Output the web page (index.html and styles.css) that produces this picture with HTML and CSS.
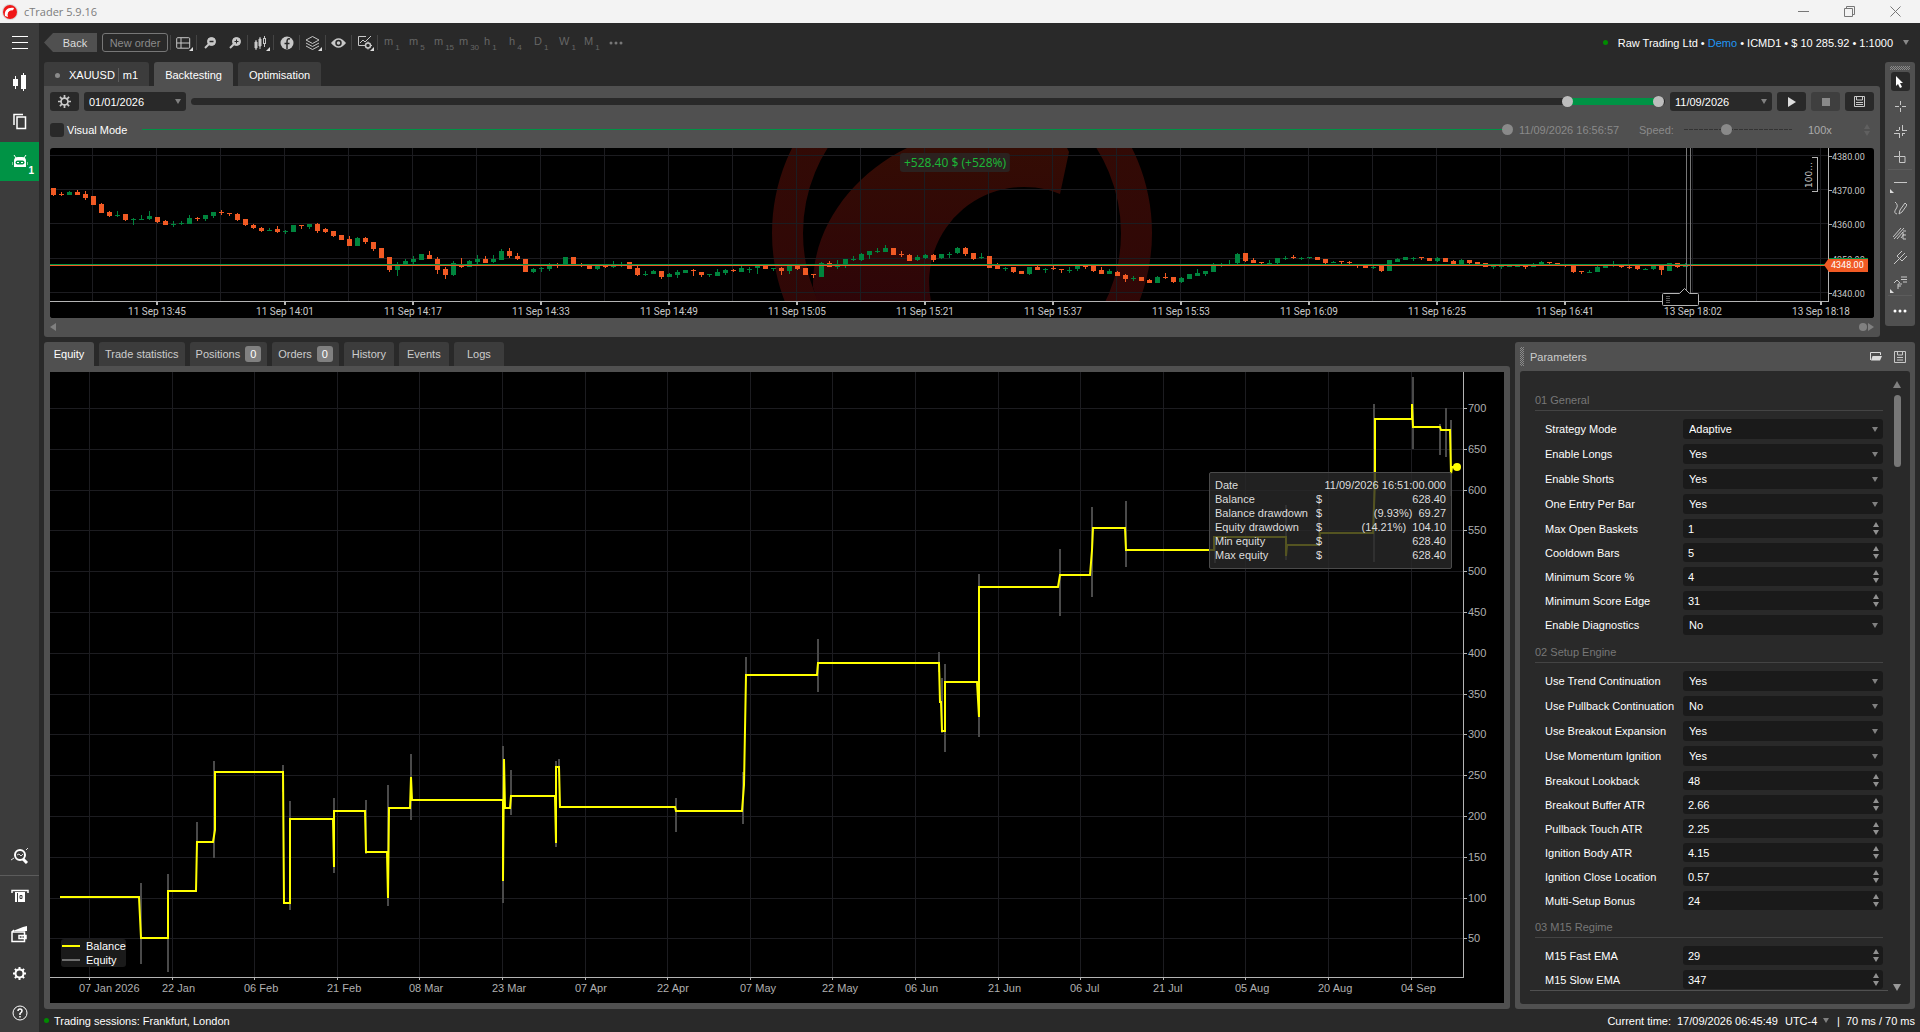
FILE: index.html
```html
<!DOCTYPE html>
<html lang="en">
<head>
<meta charset="utf-8">
<title>cTrader 5.9.16</title>
<link rel="stylesheet" href="styles.css">
</head>
<body>
<div class="app">
  <header class="titlebar">
    <svg class="brand" viewBox="0 0 16 16"><circle cx="8" cy="8" r="8" fill="#d9d9d9"/><circle cx="8" cy="8" r="7" fill="#f01818"/><path d="M3 12C2 6 6 3 12 4l-1 3C8 6 5 8 6 13Z" fill="#fff"/><path d="M7 12c-1-4 2-5 4-4l1-2" fill="none" stroke="#f01818" stroke-width="2"/></svg>
    <span class="title">cTrader 5.9.16</span>
    <div class="window-buttons">
      <button aria-label="Minimise"><svg width="11" height="11"><path d="M0 5.5h11"/></svg></button>
      <button aria-label="Restore"><svg width="11" height="11"><path d="M.5 2.500h8v8h-8zM2.500 2.500v-2h8v8h-2"/></svg></button>
      <button aria-label="Close"><svg width="11" height="11"><path d="M.5.5l10 10M10.500.5l-10 10"/></svg></button>
    </div>
  </header>

  <div class="body">
    <nav class="sidebar">
      <button class="menu" aria-label="Menu"><svg width="16" height="13" class="line thin"><path d="M0 .5h16M0 6.500h16M0 12.500h16"/></svg></button>
      <button aria-label="Trade"><svg width="16" height="18" fill="#fff"><path d="M1 6h5v7H1zM3 3h1v13H3zM9 2h5v14H9zM11 0h1v18h-1z"/></svg></button>
      <button aria-label="Copy"><svg width="14" height="17" class="line copy"><path d="M4 4h8.500v11.500H4zM1 12V1.500h9"/></svg></button>
      <button class="active" aria-label="Algo"><svg width="16" height="14"><path d="M2 0l2 3M14 0l-2 3" stroke="#fff"/><path d="M2 12V6q0-4 4-4h4q4 0 4 4v6z" fill="#fff"/><path d="M0 7v3M16 7v3" stroke="#fff"/><rect x="3.500" y="5.500" width="9" height="4" rx="2" fill="#009345"/><path d="M5 7h2v1H5zM9 7h2v1H9z" fill="#fff"/></svg><span class="count">1</span></button>
      <span class="spacer"></span>
      <button aria-label="Analyze"><svg width="18" height="16"><circle cx="9" cy="7" r="5" fill="none" stroke="#fff" stroke-width="2"/><path d="M12 11l4 4" stroke="#fff" stroke-width="3"/><path d="M0 12l3-2M15 2l2-2M6 7l2-1 2 2 2-2" stroke="#ddd" fill="none"/></svg></button>
      <hr>
      <button aria-label="Withdraw"><svg width="18" height="14"><path d="M1 4V1.500h16V4" fill="none" stroke="#fff" stroke-width="1.500"/><path d="M4 3h10v10H4z" fill="#fff"/><path d="M6.500 4v9M9 6.500h2v3H9z" stroke="#3c3c3c" fill="none"/></svg></button>
      <button aria-label="Wallet"><svg width="18" height="17"><path d="M2 5l10-4 4-1v5z" fill="#fff"/><path d="M1 6h12.500v9.500H1zM1 6l2-2M8 9.500h7v3H8z" fill="#3c3c3c" stroke="#fff" stroke-width="1.500"/><path d="M10 10.500h2v1h-2z" fill="#fff"/></svg></button>
      <button aria-label="Settings"><svg width="15" height="15" viewBox="0 0 15 15"><g stroke="#fff" fill="none"><circle cx="7.500" cy="7.500" r="4" stroke-width="2"/><path stroke-width="2" d="M7.500 1v2.500M7.500 11.500V14M1 7.500h2.500M11.500 7.500H14M2.900 2.900l1.800 1.800M10.300 10.300l1.800 1.800M12.100 2.900l-1.800 1.800M4.700 10.300l-1.800 1.800"/></g></svg></button>
      <button aria-label="Help"><svg width="16" height="16" class="line thin"><circle cx="8" cy="8" r="7"/><path d="M6 6q0-2 2-2t2 2q0 1-2 2.500V10M8 11v1.500" stroke-width="1.500"/></svg></button>
    </nav>

    <div class="content">
      <div class="toolbar">
        <button class="back">Back</button>
        <button class="new-order">New order</button>
        <div class="tools">
          <button class="sub" aria-label="Layout"><svg width="15" height="12" class="ico"><rect x=".7" y=".7" width="13" height="10.500" rx="1"/><path d="M5 1v10M5 6h9M1 6h4"/></svg></button>
          <button aria-label="Zoom out"><svg width="12" height="12" class="ico"><circle cx="7.500" cy="4.500" r="4" fill="#c8c8c8"/><path d="M1 11l4-4" stroke-width="2"/><path d="M5.500 4.500h4" stroke="#292929" stroke-width="1.500"/></svg></button>
          <button class="bare" aria-label="Zoom in"><svg width="12" height="12" class="ico"><circle cx="7.500" cy="4.500" r="4" fill="#c8c8c8"/><path d="M1 11l4-4" stroke-width="2"/><path d="M5.500 4.500h4M7.500 2.500v4" stroke="#292929"/></svg></button>
          <button class="sub" aria-label="Chart type"><svg width="13" height="14" class="ico"><path d="M1 6h2v6H1zM5 3h2v7H5z" fill="#c8c8c8"/><path d="M2 4v10M6 1v12M10.500 0v11"/><rect x="9.500" y="2.500" width="2" height="5" fill="#292929"/></svg></button>
          <button aria-label="Indicators"><svg width="14" height="14"><circle cx="7" cy="7" r="6.500" fill="#c8c8c8"/><path d="M10 3Q7 2 7 6v7M4.500 7.500h5" fill="none" stroke="#292929" stroke-width="1.500"/></svg></button>
          <button class="sub" aria-label="Objects"><svg width="15" height="14" class="ico"><path d="M1 4l6.500-3.500L14 4 7.500 7.500zM1 7l6.500 3.500L14 7M1 10l6.500 3.500L14 10"/></svg></button>
          <button aria-label="View options"><svg width="15" height="10"><path d="M0 5Q7.500-4.500 15 5 7.500 14.500 0 5z" fill="#c8c8c8"/><circle cx="7.500" cy="5" r="2.500" fill="#c8c8c8" stroke="#292929" stroke-width="1.500"/></svg></button>
          <button class="sub" aria-label="Chart settings"><svg width="15" height="15" class="ico"><path d="M7 10.500H1.500v-9H9M3 8l3-3 2 2 6-6"/><circle cx="11" cy="10.500" r="2.500" stroke-width="1.500"/><path d="M11 6.500v1.500M11 13v1.500M7 10.500h1.500M13.500 10.500H15"/></svg></button>
        </div>
        <div class="frames">
          <button>m<sub>1</sub></button><button>m<sub>5</sub></button><button>m<sub>15</sub></button><button>m<sub>30</sub></button><button>h<sub>1</sub></button><button>h<sub>4</sub></button><button>D<sub>1</sub></button><button>W<sub>1</sub></button><button>M<sub>1</sub></button>
          <button class="more" aria-label="More periods"><svg width="14" height="4" fill="#777"><circle cx="2" cy="2" r="1.500"/><circle cx="7" cy="2" r="1.500"/><circle cx="12" cy="2" r="1.500"/></svg></button>
        </div>
        <button class="account"><i class="dot"></i><span>Raw Trading Ltd • <b>Demo</b> • ICMD1 • $ 10 285.92 • 1:1000</span><i class="caret"></i></button>
      </div>

      <div class="upper">
        <section class="workspace">
          <div class="tabs">
            <button class="symbol"><i></i><span>XAUUSD</span><em>m1</em></button>
            <button class="on">Backtesting</button>
            <button>Optimisation</button>
          </div>
          <div class="panel">
            <div class="range-row">
              <button class="square" aria-label="Backtesting settings"><svg width="13" height="13" viewBox="0 0 15 15"><g stroke="#c8c8c8" fill="none"><circle cx="7.500" cy="7.500" r="4" stroke-width="2"/><path stroke-width="2" d="M7.500 0v3.500M7.500 11.500V15M0 7.500h3.500M11.500 7.500H15M2.200 2.200l2.500 2.500M10.300 10.300l2.500 2.500M12.800 2.200l-2.500 2.500M4.700 10.300l-2.500 2.500"/></g></svg></button>
              <select class="date" aria-label="Start date"><option>01/01/2026</option></select>
              <div class="span">
                <input type="range" aria-label="Range start" min="0" max="1000" value="937">
                <input type="range" aria-label="Range end" min="0" max="1000" value="999">
              </div>
              <select class="date" aria-label="End date"><option>11/09/2026</option></select>
              <button class="square" aria-label="Start"><svg width="8" height="10"><path d="M0 0l8 5-8 5z" fill="#ddd"/></svg></button>
              <button class="square off" aria-label="Stop" disabled><svg width="8" height="8"><path d="M0 0h8v8H0z" fill="#8a8a8a"/></svg></button>
              <button class="square" aria-label="Save"><svg width="13" height="13" class="ico"><path d="M1.500 1.500h10v10h-10zM3.500 1v4h6V1M3 7.500h7M3 9.500h7"/></svg></button>
            </div>
            <div class="visual-row">
              <label class="check"><input type="checkbox">Visual Mode</label>
              <input class="progress" type="range" aria-label="Playback position" value="100" disabled>
              <span class="stamp">11/09/2026 16:56:57</span>
              <label class="speed" for="speed">Speed:</label>
              <input class="rate" id="speed" type="range" min="0" max="100" value="38" disabled>
              <input class="factor" type="text" value="100x" aria-label="Speed factor" disabled>
            </div>
            <div class="price-chart">
              <svg id="price" role="img" aria-label="XAUUSD m1 chart"></svg>
              <output class="profit">+528.40 $ (+528%)</output>
            </div>
            <div class="scroll-row"><i class="left"></i><i class="knob"></i><i class="right"></i></div>
          </div>
        </section>

        <aside class="draw-tools">
          <i class="grip"></i>
          <button class="on" aria-label="Cursor"><svg width="8" height="12"><path d="M0 0l7 7H4l2 4-2 1-2-4-2 2z" fill="#fff"/></svg></button>
          <button aria-label="Crosshair"><svg width="11" height="11" class="ico"><path d="M5.500 0v4M5.500 7v4M0 5.500h4M7 5.500h4"/></svg></button>
          <button aria-label="Synchronised crosshair"><svg width="13" height="13" class="ico"><path d="M5.500 2v3M5.500 8v5M8.500 0v5M8.500 8v3M2 5.500h3M8 5.500h5M0 8.500h5M8 8.500h3"/></svg></button>
          <button aria-label="Measure"><svg width="12" height="12" class="ico"><path d="M5.500 0v5M0 5.500h5M5.500 5.500h5.500v6H5.500z"/></svg></button>
          <hr>
          <button class="sub" aria-label="Line"><svg width="13" height="3" class="ico"><path d="M0 1.500h13"/></svg></button>
          <button aria-label="Freehand"><svg width="13" height="14" class="ico"><path d="M1 1q4 3 1 7t1 5M5 13l1-4 5-7 2 2-5 7z"/></svg></button>
          <button aria-label="Channel"><svg width="14" height="14" class="ico"><path d="M0 11L8 2M1 13L11 2M4 13l6-7M8 12l3-4M10 6v7M13 5h-3M13 9h-3M13 13h-3"/></svg></button>
          <button aria-label="Pitchfork"><svg width="13" height="13" class="ico"><path d="M0 13l6-6M3 5l5 5M3 5l5-5M6 7l5-5M8 10l5-5"/></svg></button>
          <button class="sub" aria-label="Fibonacci"><svg width="14" height="14" class="ico"><path d="M1 7l3-3 3 3M5 8h4M5 8v5M5 10h3M8 1h6M8 3.500h6M10 6h4"/></svg></button>
          <hr>
          <button class="last" aria-label="More tools"><svg width="14" height="4" fill="#fff"><circle cx="2" cy="2" r="1.500"/><circle cx="7" cy="2" r="1.500"/><circle cx="12" cy="2" r="1.500"/></svg></button>
        </aside>
      </div>

      <div class="lower">
        <section class="report">
          <div class="tabs">
            <button class="on">Equity</button>
            <button>Trade statistics</button>
            <button>Positions <span class="badge">0</span></button>
            <button>Orders <span class="badge">0</span></button>
            <button>History</button>
            <button>Events</button>
            <button>Logs</button>
          </div>
          <div class="panel">
            <div class="equity-chart">
              <svg id="equity" role="img" aria-label="Equity curve"></svg>
              <ul class="legend"><li class="balance">Balance</li><li>Equity</li></ul>
              <table class="tip">
                <tr><th>Date</th><td colspan="2">11/09/2026 16:51:00.000</td></tr>
                <tr><th>Balance</th><td class="cur">$</td><td>628.40</td></tr>
                <tr><th>Balance drawdown</th><td class="cur">$</td><td>(9.93%)&nbsp; 69.27</td></tr>
                <tr><th>Equity drawdown</th><td class="cur">$</td><td>(14.21%)&nbsp; 104.10</td></tr>
                <tr><th>Min equity</th><td class="cur">$</td><td>628.40</td></tr>
                <tr><th>Max equity</th><td class="cur">$</td><td>628.40</td></tr>
              </table>
            </div>
          </div>
        </section>

        <section class="params">
          <header>
            <i class="grip"></i><h2>Parameters</h2>
            <button aria-label="Load"><svg width="13" height="9"><path d="M.5 8V.5h10V3" fill="none" stroke="#ddd"/><path d="M2.500 4H12l-2 4.500H1z" fill="#ddd"/></svg></button>
            <button aria-label="Save parameters"><svg width="12" height="12" class="ico"><path d="M.5.5h11v11H.5zM3.500 1v3h5V1M3 6.500h6M3 9h6"/></svg></button>
          </header>
          <div class="sheet">
            <form class="fields" id="fields"></form>
            <div class="bar"><i class="up"></i><i class="thumb"></i><i class="down"></i></div>
          </div>
        </section>
      </div>

      <footer class="status">
        <i class="dot"></i><span class="sessions">Trading sessions: Frankfurt, London</span>
        <span>Current time:</span><time>17/09/2026 06:45:49</time>
        <select class="zone" aria-label="Time zone"><option>UTC-4</option></select>
        <span>| &nbsp;70 ms / 70 ms</span>
      </footer>
    </div>
  </div>
</div>
<script src="app.js"></script>
</body>
</html>
```
FILE: styles.css
```css
* { box-sizing: border-box; }
html, body { height: 100%; }
body {
  margin: 0;
  background: #292929;
  color: #fff;
  font: 11px/14px "Liberation Sans", Arial, sans-serif;
  overflow: hidden;
}
button, select, input { font: inherit; color: inherit; border: 0; margin: 0; padding: 0; background: none; }
button { display: flex; align-items: center; justify-content: center; flex: none; white-space: nowrap; }
svg { display: block; flex: none; }
i { font-style: normal; flex: none; }
hr { border: 0; margin: 0; width: 100%; height: 1px; background: #5c5c5c; flex: none; }
.ico { fill: none; stroke: #c8c8c8; }
.line { fill: none; stroke: #fff; stroke-width: 2; }
.thin { stroke-width: 1; }
.copy { stroke-width: 1.5; }

.app { display: flex; flex-direction: column; height: 100vh; }
.titlebar { display: flex; align-items: center; height: 23px; padding: 0 2px; background: #f3f3f3; color: #7c7c7c; flex: none; }
.brand { width: 16px; height: 16px; }
.title { margin-left: 6px; font: 11px/16px "Open Sans", sans-serif; }
.window-buttons { display: flex; margin-left: auto; }
.window-buttons button { width: 46px; height: 20px; }
.window-buttons svg { fill: none; stroke: #777; }

.body { display: flex; flex: 1; min-height: 0; }
.sidebar { display: flex; flex-direction: column; gap: 1px; width: 39px; background: #3c3c3c; flex: none; }
.sidebar button { position: relative; width: 39px; height: 39px; }
.sidebar .menu { height: 38px; }
.sidebar .spacer { flex: 1; }
.sidebar .spacer ~ * { margin-top: -1px; }
.sidebar .active { background: #009345; }
.count { position: absolute; right: 5px; bottom: 3px; font-size: 10px; line-height: 14px; font-weight: bold; }

.content { display: flex; flex-direction: column; flex: 1; min-width: 0; padding: 0 5px; }

.toolbar { display: flex; align-items: center; height: 39px; flex: none; }
.back { width: 53px; height: 19px; padding-left: 9px; background: #505050; color: #ddd; clip-path: polygon(0 50%, 9px 0, 100% 0, 100% 100%, 9px 100%); }
.new-order { width: 66px; height: 19px; margin-left: 5px; border: 1px solid #777; border-radius: 3px; color: #8a8a8a; }
.tools { display: flex; align-items: center; margin-left: 2px; }
.tools button { position: relative; width: 26px; height: 15px; border-left: 1px solid #444; }
.tools .bare { width: 25px; border-left-color: transparent; }
.sub { position: relative; }
.sub::after { content: ""; position: absolute; right: 3px; bottom: -1px; border: 2px solid transparent; border-right-color: #ddd; border-bottom-color: #ddd; }
.frames { display: flex; border-left: 1px solid #444; height: 15px; align-items: center; padding-left: 6px; color: #666; }
.frames button { width: 25px; height: 18px; align-items: baseline; justify-content: flex-start; gap: 2px; }
.frames sub { font-size: 8px; line-height: 8px; vertical-align: baseline; position: relative; top: 5px; }
.frames .more { align-items: center; }
.account { margin-left: auto; gap: 10px; padding-right: 6px; }
.account b { font-weight: normal; color: #2196f3; }
.dot { width: 5px; height: 5px; border-radius: 50%; background: #008a00; }
.caret { border: 3px solid transparent; border-top: 5px solid #888; border-bottom: 0; }

.upper { display: flex; gap: 5px; align-items: flex-start; flex: none; }
.workspace { flex: 1; min-width: 0; }
.tabs { display: flex; gap: 5px; }
.tabs button { height: 24px; padding: 0 11px; background: #3c3c3c; border-radius: 3px 3px 0 0; color: #ccc; }
.tabs .on { background: #505050; color: #fff; }
.workspace .tabs button { color: #fff; padding-top: 2px; }
.tabs .symbol i { width: 5px; height: 5px; border-radius: 50%; background: #8a8a8a; margin-right: 9px; }
.tabs .symbol em { font-style: normal; border-left: 1px solid #5c5c5c; margin-left: 3px; padding-left: 4px; }
.panel { background: #505050; border-radius: 0 3px 3px 3px; padding: 6px; }

.range-row { display: flex; align-items: center; gap: 5px; height: 19px; }
.square { width: 29px; height: 19px; background: #292929; border-radius: 3px; }
.square.off { background: #3f3f3f; }
select {
  appearance: none;
  background: #292929 url("data:image/svg+xml,%3Csvg xmlns='http://www.w3.org/2000/svg' width='6' height='5'%3E%3Cpath d='M0 0h6L3 5z' fill='%23808080'/%3E%3C/svg%3E") no-repeat right 5px center;
  border-radius: 3px;
}
.date { width: 102px; height: 19px; padding-left: 5px; }
.span { display: grid; flex: 1; height: 7px; border-radius: 4px; background: linear-gradient(90deg, #292929 93.5%, #009345 93.5%, #009345 99.5%, #292929 99.5%); }
.span input { grid-area: 1 / 1; width: 100%; height: 7px; }
input[type="range"] { appearance: none; background: none; }
input[type="range"]::-webkit-slider-thumb { appearance: none; width: 11px; height: 11px; border-radius: 50%; background: #bdbdbd; }

.visual-row { display: flex; align-items: center; height: 37px; color: #8a8a8a; }
.check { display: flex; align-items: center; gap: 3px; color: #fff; }
.check input { appearance: none; width: 14px; height: 14px; border-radius: 3px; background: #292929; }
input.progress { flex: 1; height: 11px; margin: 0 6px 0 15px; background: linear-gradient(#009345, #009345) no-repeat left center / 100% 1px; }
.stamp { width: 120px; }
.speed { width: 45px; }
input.rate { width: 108px; height: 11px; background: repeating-linear-gradient(90deg, #333 0 4px, transparent 4px 5px) no-repeat left center / 100% 1px; }
input.progress::-webkit-slider-thumb, input.rate::-webkit-slider-thumb { background: #8a8a8a; }
.factor { width: 66px; margin-left: 16px; color: #aaa; background: url("data:image/svg+xml,%3Csvg xmlns='http://www.w3.org/2000/svg' width='6' height='12'%3E%3Cpath d='M0 5h6L3 0zM0 7h6L3 12z' fill='%23606060'/%3E%3C/svg%3E") no-repeat right 4px center; }

.price-chart { position: relative; height: 170px; background: #000; border-radius: 3px; overflow: hidden; }
.price-chart svg, .equity-chart svg { position: absolute; width: 100%; height: 100%; }
.profit { position: absolute; top: 5px; left: 50%; transform: translateX(-50%); margin-left: -7px; padding: 0 4px; border-radius: 3px; background: #2b211f; color: #1db436; font: 12px/19px "Noto Sans", sans-serif; white-space: nowrap; }
.scroll-row { display: flex; align-items: center; height: 19px; margin-bottom: -6px; padding-bottom: 1px; }
.left { border: 4px solid transparent; border-right: 6px solid #808080; border-left: 0; }
.right { border: 4px solid transparent; border-left: 6px solid #808080; border-right: 0; }
.knob { width: 8px; height: 8px; border-radius: 50%; background: #808080; margin: 0 1px 0 auto; }

.draw-tools { display: flex; flex-direction: column; align-items: center; width: 30px; padding: 4px 3px 1px; background: #505050; border-radius: 3px; }
.draw-tools button { width: 24px; height: 25px; }
.draw-tools .on { width: 19px; height: 19px; margin: 2px 0 3px; background: #292929; border-radius: 3px; }
.draw-tools .last { height: 29px; }
.draw-tools .sub::after { right: auto; left: 2px; bottom: 2px; border-color: transparent; border-left-color: #ddd; border-bottom-color: #ddd; }
.grip { width: 20px; height: 4px; background: repeating-conic-gradient(#8a8a8a 0 25%, transparent 0 50%) 0 0 / 2px 2px; }

.lower { display: flex; gap: 5px; flex: 1; min-height: 0; margin-top: 5px; }
.report { display: flex; flex-direction: column; flex: 1; min-width: 0; }
.report .panel { flex: 1; min-height: 0; }
.report .tabs button { padding: 0 6px; min-width: 50px; }
.badge { margin-left: 5px; width: 16px; border-radius: 3px; background: #808080; color: #fff; line-height: 16px; }
.equity-chart { position: relative; height: 100%; background: #000; }
.legend { position: absolute; left: 11px; bottom: 36px; margin: 0; padding: 0; list-style: none; background: #1a1a1a; border-radius: 3px; }
.legend li { display: flex; align-items: center; gap: 6px; }
.legend li::before { content: ""; width: 18px; height: 2px; margin-left: 1px; background: #707070; }
.legend .balance::before { background: #ff0; }
.tip { position: absolute; top: 100px; right: 52px; width: 243px; height: 95px; padding: 5px 5px 6px; border: 1px solid #4a4a4a; border-radius: 2px; background: rgba(41, 41, 41, .8); color: #ddd; border-spacing: 0; line-height: 14px; }
.tip th { padding: 0; font-weight: normal; text-align: left; width: 101px; }
.tip td { padding: 0; text-align: right; }
.tip .cur { text-align: left; }

.params { display: flex; flex-direction: column; width: 400px; padding: 0 5px 5px; background: #505050; border-radius: 3px; flex: none; }
.params header { display: flex; align-items: center; height: 29px; margin-right: -2px; }
.params .grip { width: 4px; height: 19px; }
.params h2 { flex: 1; margin: 0 0 0 6px; font-size: 11px; font-weight: normal; color: #ccc; }
.params header button { width: 24px; height: 24px; }
.sheet { display: flex; flex: 1; min-height: 0; background: #292929; border-radius: 3px; padding: 10px 10px 13px; }
.fields { flex: 1; overflow: hidden; padding: 7px 5px 0; border-bottom: 1px solid #505050; }
fieldset { border: 0; margin: 0; padding: 4px 0 0; min-width: 0; }
legend { float: left; width: 100%; height: 19px; padding: 0; margin: 0 0 8px; border-bottom: 1px solid #444; color: #777; line-height: 16px; }
legend + .field { clear: both; }
.field { display: grid; grid-template-columns: 1fr 200px; padding-left: 10px; margin-bottom: 5px; align-items: center; }
.field select { height: 20px; padding-left: 6px; background-color: #1a1a1a; }
.field input {
  height: 19px; padding-left: 5px; border-radius: 3px; appearance: textfield;
  background: #1a1a1a url("data:image/svg+xml,%3Csvg xmlns='http://www.w3.org/2000/svg' width='6' height='13'%3E%3Cpath d='M0 5h6L3 0zM0 8h6L3 13z' fill='%23909090'/%3E%3C/svg%3E") no-repeat right 4px center;
}
.field input::-webkit-inner-spin-button { appearance: none; }
.bar { display: flex; flex-direction: column; align-items: center; width: 22px; margin-right: -8px; margin-left: -2px; }
.bar .thumb { width: 7px; height: 72px; border-radius: 4px; background: #777; margin-top: 7px; }
.up { border: 4px solid transparent; border-bottom: 7px solid #808080; border-top: 0; }
.down { border: 4px solid transparent; border-top: 7px solid #999; border-bottom: 0; margin-top: auto; }

.status { display: flex; align-items: center; height: 23px; flex: none; }
.sessions { margin: 0 auto 0 5px; }
.status time { margin: 0 7px 0 6px; }
.zone { width: 44px; height: 18px; background-color: transparent; background-position: right 0 center; margin-right: 8px; }
.status span { white-space: pre; }

.axis { fill: #c8c8c8; font: 10px Roboto, sans-serif; text-anchor: middle; }
.scale { fill: #c8c8c8; font: 9px Roboto, sans-serif; }
.eq-axis { fill: #b0b0b0; font: 11px "Liberation Sans", Arial, sans-serif; }
.grid { stroke: #1c1c20; fill: none; shape-rendering: crispEdges; }
.frame { stroke: #b4b4b4; fill: none; shape-rendering: crispEdges; }
.crisp { shape-rendering: crispEdges; }
.last-price { fill: #fff; }
.measure { font-family: "DejaVu Sans", sans-serif; }
```
FILE: app.js
```javascript
// Candles: direction, body top, body bottom, high, low.
const candles = `O 48 55 48 56,O 54 55 52 56,G 52 55 51 55,O 52 55 50 55,O 54 58 51 60,O 56 65 56 65,O 64 73 63 73,O 72 76 71 77,G 75 76 71 77,O 74 80 74 81,G 79 80 78 85,G 79 80 75 80,G 76 79 71 80,O 77 82 77 83,O 81 85 80 85,G 84 85 81 87,G 83 84 81 85,G 78 84 75 84,O 78 79 77 81,G 75 79 75 81,G 72 76 72 78,O 72 73 70 75,O 73 74 73 76,O 74 80 73 81,O 79 85 79 86,O 85 88 84 89,O 88 91 87 92,G 90 91 88 91,O 89 92 86 93,G 91 92 90 94,G 85 92 85 92,O 85 86 85 89,G 84 87 84 89,O 84 91 83 93,O 89 92 88 93,O 91 96 91 97,O 95 100 95 100,O 99 106 96 106,G 98 106 97 106,O 98 102 97 104,O 102 109 102 111,O 108 118 108 118,O 117 130 117 132,G 125 130 122 136,G 121 125 119 125,G 119 122 116 125,G 114 120 114 120,O 115 119 111 119,O 119 130 117 134,O 129 135 127 139,G 123 135 121 136,O 125 127 118 128,G 121 127 120 127,G 119 122 115 124,O 119 123 116 123,G 119 122 115 123,G 111 120 109 120,O 111 116 108 118,O 116 119 113 120,O 119 132 119 132,G 129 132 128 133,G 128 129 127 132,G 125 129 123 131,O 125 126 123 128,G 117 125 117 125,O 117 125 117 125,O 124 125 123 127,O 125 129 125 129,G 126 129 125 130,O 126 127 125 128,G 125 127 121 128,G 125 126 122 127,O 122 129 122 129,O 128 135 126 136,G 134 135 131 136,G 131 134 130 134,O 131 137 131 139,G 134 137 133 137,G 132 135 130 138,G 130 133 130 133,O 130 131 129 136,O 132 135 132 137,G 134 135 134 137,G 132 136 129 136,G 130 133 129 135,O 130 131 129 132,G 128 132 126 132,G 129 130 127 133,G 126 128 126 134,O 125 129 125 129,G 128 129 128 131,O 128 131 127 135,G 126 131 126 134,O 126 129 125 130,O 128 135 128 135,O 134 135 134 138,G 123 137 122 137,O 123 127 121 127,G 126 127 120 129,G 119 125 119 128,G 119 120 116 121,G 114 120 113 121,G 111 115 111 119,G 111 112 108 113,G 108 112 105 112,O 108 115 108 115,O 114 115 111 117,O 115 121 114 121,G 117 120 115 121,G 115 118 114 119,O 115 120 114 122,G 114 118 114 119,G 114 115 112 118,G 108 113 107 114,O 108 114 107 116,O 113 119 113 120,G 117 118 113 119,O 116 128 116 128,O 125 129 123 129,G 128 129 127 131,O 127 132 127 133,O 131 134 131 134,G 127 134 127 135,O 127 130 126 130,G 129 130 128 133,O 128 129 126 130,O 129 130 129 133,G 130 131 127 133,G 126 129 126 131,O 126 127 126 129,O 126 131 126 132,O 130 134 127 134,G 131 134 129 134,O 132 136 131 136,O 135 139 134 142,G 138 139 136 141,O 137 141 137 141,O 140 143 139 143,G 137 143 136 143,O 137 138 133 139,O 137 142 137 143,G 138 142 137 143,G 134 139 134 139,G 133 136 129 136,G 131 134 131 136,G 125 132 123 132,G 124 125 123 127,G 124 125 120 125,G 114 123 113 124,O 113 121 113 122,O 120 123 118 123,O 122 123 122 124,G 123 124 120 125,G 118 123 118 124,G 118 119 116 120,O 117 118 115 119,G 118 119 117 120,G 117 118 117 119,O 117 120 117 120,O 119 123 119 124,G 122 123 121 123,O 121 122 121 125,O 122 123 121 124,O 125 126 125 128,O 125 128 125 128,G 127 128 126 129,O 125 131 125 132,G 120 131 120 131,G 119 122 118 122,G 117 120 117 120,G 118 119 117 121,O 117 118 117 120,O 118 121 118 121,G 118 121 117 122,O 118 122 118 122,O 121 125 120 125,G 120 125 119 125,O 120 123 120 124,O 122 125 122 125,O 123 127 123 127,G 126 127 125 129,G 126 127 125 129,G 126 127 126 127,G 126 127 126 127,O 126 127 126 129,G 125 127 123 127,G 122 125 121 125,O 122 123 122 124,O 123 124 123 124,O 125 126 125 127,O 125 132 125 133,O 131 132 131 134,G 132 133 130 133,G 127 132 126 132,G 126 128 126 128,G 125 126 121 127,O 126 127 125 128,O 127 128 125 129,O 126 129 126 130,G 129 130 128 130,G 126 129 126 130,O 126 130 126 135,G 123 131 123 131,O 123 127 123 128,G 126 127 123 127`
  .split(",").map(c => c.split(" "));

const times = ["11 Sep 13:45", "11 Sep 14:01", "11 Sep 14:17", "11 Sep 14:33", "11 Sep 14:49", "11 Sep 15:05", "11 Sep 15:21", "11 Sep 15:37", "11 Sep 15:53", "11 Sep 16:09", "11 Sep 16:25", "11 Sep 16:41", "13 Sep 18:02", "13 Sep 18:18"];
const days = ["07 Jan 2026", "22 Jan", "06 Feb", "21 Feb", "08 Mar", "23 Mar", "07 Apr", "22 Apr", "07 May", "22 May", "06 Jun", "21 Jun", "06 Jul", "21 Jul", "05 Aug", "20 Aug", "04 Sep"];

// Balance curve and equity extremes, in chart units.
const balance = [10,525,89,525,91,566,118,566,118,519,146,519,147,470,163,470,165,458,165,400,233,400,234,531,240,531,240,447,283,447,284,495,284,439,315,439,316,480,337,480,338,526,339,436,360,436,361,405,362,428,453,428,453,509,454,387,455,436,460,436,461,424,505,424,506,471,506,395,509,395,510,435,625,435,626,439,692,439,694,413,696,303,767,303,768,291,889,291,890,330,891,330,892,359,895,359,895,310,927,310,929,345,929,215,1008,215,1010,203,1040,203,1042,178,1043,156,1075,156,1076,178,1164,178,1164,165,1236,165,1236,184,1237,173,1269,173,1270,161,1323,161,1325,108,1325,47,1362,47,1362,32,1363,55,1390,55,1391,58,1400,58,1401,102,1402,95,1407,95];
const swings = [[91,511,592],[118,502,600],[147,450,470],[164,389,486],[233,393,420],[240,429,538],[284,426,501],[316,428,482],[338,413,534],[361,382,448],[453,374,531],[461,398,443],[506,389,475],[509,387,400],[626,426,460],[693,400,452],[696,285,303],[768,267,320],[889,280,300],[892,306,361],[895,292,380],[929,202,365],[1010,177,244],[1042,135,225],[1076,129,195],[1165,165,191],[1236,133,188],[1269,128,173],[1324,32,190],[1363,5,77],[1390,52,83],[1396,36,85],[1401,48,124]];

function drawPrice() {
  const svg = document.getElementById("price");
  const k = svg.clientWidth / 1824;
  const X = v => Math.round(v * k);
  const right = svg.clientWidth - 46;
  const cx = X(912);
  let grid = "", labels = "", up = "", down = "", ticks = "";
  for (let i = 0; i < 28; i++) grid += `M${X(42 + 64 * i) + .5} 0V153`;
  [7, 41, 75, 110, 144].forEach((y, i) => {
    grid += `M0 ${y + .5}H${right}`;
    ticks += `M${right} ${y + 1.5}h4`;
    labels += `<text class="scale" x="${right + 4}" y="${y + 5}">${4380 - 10 * i}.00</text>`;
  });
  times.forEach((t, i) => {
    const x = X(106 + 128 * i);
    ticks += `M${x + .5} 153v4M${x + 1.5} 153v4`;
    labels += `<text class="axis" x="${x + 1}" y="167">${t}</text>`;
  });
  candles.forEach(([dir, top, bottom, high, low], i) => {
    const x = X(3 + 8 * i);
    const d = `M${x - 2} ${top - 8}h5V${bottom - 8}h-5zM${x} ${high - 8}h1V${low - 8}h-1z`;
    if (dir === "G") up += d; else down += d;
  });
  svg.innerHTML = `
    <defs><linearGradient id="mark" x2="0" y2="1"><stop stop-color="#340c04"/><stop offset="1" stop-color="#2e0508"/></linearGradient></defs>
    <g transform="translate(${cx} 85)" fill="url(#mark)">
      <path fill-rule="evenodd" d="M-190 0a190 190 0 1 0 380 0a190 190 0 1 0-380 0zM-159 0a159 159 0 1 0 318 0a159 159 0 1 0-318 0z"/>
      <path d="M-149 54C-150-5-110-58-55-85H105l2 4-9 42A95 95 0 0 0-31 68H-145z"/>
    </g>
    <path fill="#000" d="M0 153.500H${svg.clientWidth}V170H0z"/>
    <path class="grid" d="${grid}"/>
    <path class="crisp" fill="#f15a24" d="${down}"/><path class="crisp" fill="#00843d" d="${up}"/>
    <path class="crisp" stroke="#009345" d="M0 116.500H${right}"/><path class="crisp" stroke="#f15a24" d="M0 117.500H${right}"/>
    <path class="crisp" stroke="#777" d="M${X(1636)}.5 0V146M${X(1640)}.5 0V146"/>
    <path class="frame" d="M0 153.500H${right + .5}V0${ticks}"/>
    ${labels}
    <path d="M${right - 4} 117L${right + 1} 110H${right + 40}V124H${right + 1}z" fill="#f15a24"/>
    <path d="M${right + 1} 110.500h39" stroke="#009345"/>
    <text class="scale last-price" x="${right + 3}" y="120">4348.00</text>
    <path d="M${X(1612)}.5 146.500q0-1 1-1h16l5-5 5 5h8q1 0 1 1v10q0 1-1 1h-34q-1 0-1-1z" fill="#000" stroke="#b4b4b4"/>
    <path d="M${X(1617)} 148v7M${X(1619)} 148v7" stroke="#b4b4b4" stroke-dasharray="1 1"/>
    <path class="frame" d="M${right - 16} 9.500h5v34h-5"/>
    <text class="scale measure" transform="translate(${right - 16} 40) rotate(-90)">100...</text>`;
}

function drawEquity() {
  const svg = document.getElementById("equity");
  const w = svg.clientWidth, h = svg.clientHeight;
  const k = (w - 41) / 1413, q = (h - 26) / 605;
  const X = v => Math.round(v * k), Y = v => Math.round(v * q);
  const right = w - 41, floor = h - 26;
  let grid = "", ticks = "", labels = "", bars = "", line = "";
  days.forEach((t, i) => {
    const x = X(39 + 82.6 * i);
    grid += `M${x + .5} 0V${floor}`;
    ticks += `M${x + .5} ${floor}v3`;
    labels += `<text class="eq-axis" x="${x - 10}" y="${floor + 15}">${t}</text>`;
  });
  for (let i = 0; i < 14; i++) {
    const y = Y(36 + 40.8 * i);
    grid += `M0 ${y + .5}H${right}`;
    ticks += `M${right} ${y + .5}h4`;
    labels += `<text class="eq-axis" x="${right + 5}" y="${y + 4}">${700 - 50 * i}</text>`;
  }
  swings.forEach(([x, a, b]) => { bars += `M${X(x)} ${Y(a)}V${Y(b)}`; });
  for (let i = 0; i < balance.length; i += 2) line += `${X(balance[i])},${Y(balance[i + 1])} `;
  svg.innerHTML = `
    <path class="grid" d="${grid}"/>
    <path d="${bars}" stroke="#4a4a4a" stroke-width="2"/>
    <polyline points="${line}" fill="none" stroke="#ff0" stroke-width="2"/>
    <circle cx="${X(1407)}" cy="${Y(95)}" r="4" fill="#ff0"/>
    <path class="frame" d="M0 ${floor + .5}H${right + .5}V0${ticks}"/>
    ${labels}`;
}

const groups = [
  ["01 General", [["Strategy Mode", "Adaptive"], ["Enable Longs", "Yes"], ["Enable Shorts", "Yes"], ["One Entry Per Bar", "Yes"], ["Max Open Baskets", 1], ["Cooldown Bars", 5], ["Minimum Score %", 4], ["Minimum Score Edge", 31], ["Enable Diagnostics", "No"]]],
  ["02 Setup Engine", [["Use Trend Continuation", "Yes"], ["Use Pullback Continuation", "No"], ["Use Breakout Expansion", "Yes"], ["Use Momentum Ignition", "Yes"], ["Breakout Lookback", 48], ["Breakout Buffer ATR", 2.66], ["Pullback Touch ATR", 2.25], ["Ignition Body ATR", 4.15], ["Ignition Close Location", 0.57], ["Multi-Setup Bonus", 24]]],
  ["03 M15 Regime", [["M15 Fast EMA", 29], ["M15 Slow EMA", 347]]]
];
let id = 0;
document.getElementById("fields").innerHTML = groups.map(([name, rows]) => `<fieldset><legend>${name}</legend>` + rows.map(([label, value]) => {
  const key = "p" + id++;
  const control = typeof value === "number"
    ? `<input id="${key}" type="number" step="any" value="${value}">`
    : `<select id="${key}"><option>${value}</option></select>`;
  return `<div class="field"><label for="${key}">${label}</label>${control}</div>`;
}).join("") + "</fieldset>").join("");

function draw() { drawPrice(); drawEquity(); }
window.addEventListener("resize", draw);
draw();
```
